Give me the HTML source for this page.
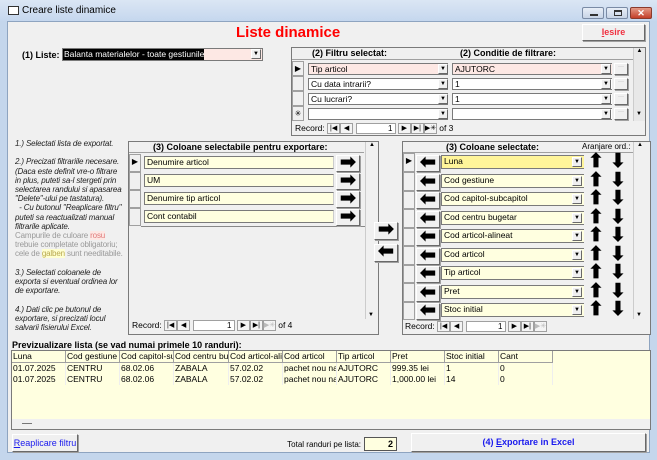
<!DOCTYPE html>
<html><head><meta charset="utf-8">
<style>
*{margin:0;padding:0;box-sizing:border-box}
body{width:657px;height:460px;overflow:hidden;background:#c4d6ec;font-family:"Liberation Sans",sans-serif;font-size:9px;color:#000;position:relative}
.a{position:absolute}
.tb{left:0;top:0;width:657px;height:21px;background:linear-gradient(#dbe6f4,#c5d7ee)}
.cont{left:7px;top:21px;width:643px;height:432px;background:#f0f0f0;border:1px solid #8ea4c0}
.btn{background:#f0f0f0;border:1px solid;border-color:#fff #696969 #696969 #fff;box-shadow:1px 1px 0 #a0a0a0}
.grid{border:1px solid #7a7a7a;background:#f0f0f0}
.cb{background:#fff;border:1px solid #7a7a7a;border-right:none;height:12px;font-size:8.5px;line-height:11px;padding-left:2px;white-space:nowrap;overflow:hidden}
.dd{width:10px;height:10px;border:1px solid;border-color:#fff #696969 #696969 #fff;background:#f0f0f0;font-size:6px;line-height:8px;text-align:center}
.sel{width:12px;border:1px solid #a0a0a0;background:#f0f0f0}
.yl{background:#ffffe0}
.pk{background:#fde8e4}
.it{font-style:italic;font-size:8px;line-height:9.2px;color:#222;white-space:nowrap;letter-spacing:-0.15px}
.arr{width:24px;height:17px;font-size:19px;line-height:14px;text-align:center;font-weight:bold}
.nav{font-size:8.5px;white-space:nowrap}
.nb{display:inline-block;width:13px;height:11px;border:1px solid #a0a0a0;background:#f4f4f4;text-align:center;font-size:7px;line-height:9px;vertical-align:middle}
.hd{background:#ffffe0;border-right:1px solid #a0a0a0;border-bottom:1px solid #a0a0a0;height:12px;line-height:11px;padding-left:1px;overflow:hidden;white-space:nowrap;font-size:8.5px;flex:none}
.cell{height:11px;line-height:11px;padding-left:1px;overflow:hidden;white-space:nowrap;font-size:8.5px;border-right:1px solid #eee;flex:none}
.ud{font-size:19px;font-weight:bold;line-height:18px}
</style></head><body>
<div class="a tb"></div>
<div class="a" style="left:8px;top:6px;width:11px;height:9px;border:1px solid #333;background:#fff"></div>
<div class="a" style="left:22px;top:5px;font-size:10px;color:#000">Creare liste dinamice</div>
<div class="a" style="left:582px;top:7px;width:22px;height:12px;border:1px solid #7a8ba5;border-radius:2px;background:linear-gradient(#e8eef7,#c8d4e6)"><div class="a" style="left:7px;top:6px;width:8px;height:2px;background:#333"></div></div>
<div class="a" style="left:606px;top:7px;width:22px;height:12px;border:1px solid #7a8ba5;border-radius:2px;background:linear-gradient(#e8eef7,#c8d4e6)"><div class="a" style="left:7px;top:2px;width:8px;height:6px;border:1px solid #333;border-top-width:2px"></div></div>
<div class="a" style="left:630px;top:7px;width:22px;height:12px;border:1px solid #8a3a2c;border-radius:2px;background:linear-gradient(#e49a86,#c4402a);color:#fff;font-size:9px;text-align:center;line-height:10px;font-weight:bold">✕</div>
<div class="a cont"></div>

<div class="a" style="left:236px;top:24px;font-size:15px;font-weight:bold;color:#f00">Liste dinamice</div>
<div class="a btn" style="left:582px;top:24px;width:63px;height:17px;color:#f03040;font-weight:bold;font-size:9px;text-align:center;line-height:15px"><u>I</u>esire</div>

<div class="a" style="left:22px;top:50px;font-weight:bold;font-size:9px">(1) Liste:</div>
<div class="a" style="left:62px;top:48px;width:201px;height:13px;border:1px solid #7a7a7a;background:#fde8e4"><span style="background:#000;color:#fff;font-size:8.5px;line-height:11px;display:inline-block;padding-left:1px;white-space:nowrap">Balanta materialelor - toate gestiunile</span><div class="a dd" style="right:1px;top:0">▼</div></div>

<!-- filter grid -->
<div class="a grid" style="left:291px;top:47px;width:355px;height:89px"></div>
<div class="a" style="left:292px;top:48px;width:341px;height:12px;border-bottom:1px solid #a0a0a0"></div>
<div class="a" style="left:312px;top:48px;font-weight:bold;font-size:9px">(2) Filtru selectat:</div>
<div class="a" style="left:460px;top:48px;font-weight:bold;font-size:9px">(2) Conditie de filtrare:</div>
<div class="a" style="left:633px;top:48px;width:12px;height:73px;background:#e8e8e8;border-left:1px solid #ccc"><div style="font-size:6px;text-align:center">▲</div></div>
<div class="a" style="left:633px;top:108px;width:12px;height:12px;font-size:6px;text-align:center;line-height:12px">▼</div>

<div class="a sel" style="left:292px;top:61px;height:15px;font-size:8px;line-height:13px;text-align:center">▶</div>
<div class="a sel" style="left:292px;top:76px;height:15px"></div>
<div class="a sel" style="left:292px;top:91px;height:15px"></div>
<div class="a sel" style="left:292px;top:106px;height:15px;font-size:8px;line-height:13px;text-align:center">✳</div>

<div class="a cb pk" style="left:308px;top:63px;width:140px">Tip articol</div><div class="a dd" style="left:438px;top:64px">▼</div>
<div class="a cb pk" style="left:452px;top:63px;width:160px">AJUTORC</div><div class="a dd" style="left:601px;top:64px">▼</div>
<div class="a cb" style="left:308px;top:78px;width:140px">Cu data intrarii?</div><div class="a dd" style="left:438px;top:79px">▼</div>
<div class="a cb" style="left:452px;top:78px;width:160px">1</div><div class="a dd" style="left:601px;top:79px">▼</div>
<div class="a cb" style="left:308px;top:93px;width:140px">Cu lucrari?</div><div class="a dd" style="left:438px;top:94px">▼</div>
<div class="a cb" style="left:452px;top:93px;width:160px">1</div><div class="a dd" style="left:601px;top:94px">▼</div>
<div class="a cb" style="left:308px;top:108px;width:140px"></div><div class="a dd" style="left:438px;top:109px">▼</div>
<div class="a cb" style="left:452px;top:108px;width:160px"></div><div class="a dd" style="left:601px;top:109px">▼</div>
<div class="a btn" style="left:614px;top:63px;width:14px;height:12px;font-size:6px;color:#999;text-align:center">···</div>
<div class="a btn" style="left:614px;top:78px;width:14px;height:12px;font-size:6px;color:#999;text-align:center">···</div>
<div class="a btn" style="left:614px;top:93px;width:14px;height:12px;font-size:6px;color:#999;text-align:center">···</div>
<div class="a btn" style="left:614px;top:108px;width:14px;height:12px;font-size:6px;color:#999;text-align:center">···</div>
<div class="a nav" style="left:295px;top:123px">Record: <span class="nb">|◀</span><span class="nb">◀</span> <span class="nb" style="width:40px;background:#fff;text-align:right;padding-right:2px;font-size:8px">1</span> <span class="nb">▶</span><span class="nb">▶|</span><span class="nb">▶✳</span> of 3</div>

<!-- instructions -->
<div class="a it" style="left:15px;top:139px;width:112px;overflow:hidden">
1.) Selectati lista de exportat.<br><br>
2.) Precizati filtrariile necesare.<br>(Daca este definit vre-o filtrare<br>in plus, puteti sa-l stergeti prin<br>selectarea randului si apasarea<br>"Delete"-ului pe tastatura).<br>
&nbsp;&nbsp;- Cu butonul "Reaplicare filtru"<br>puteti sa reactualizati manual<br>filtrarile aplicate.<br>
<span style="font-style:normal;color:#999">Campurile de culoare <span style="color:#e07a7a;background:#fde8e4">rosu</span><br>trebuie completate obligatoriu;<br>cele de <span style="color:#b8a850;background:#ffffd0">galben</span> sunt needitabile.</span><br><br>
3.) Selectati coloanele de<br>exporta si eventual ordinea lor<br>de exportare.<br><br>
4.) Dati clic pe butonul de<br>exportare, si precizati locul<br>salvarii fisierului Excel.</div>

<!-- left grid -->
<div class="a grid" style="left:128px;top:141px;width:251px;height:194px"></div>
<div class="a" style="left:129px;top:142px;width:235px;height:11px;border-bottom:1px solid #a0a0a0"></div>
<div class="a" style="left:153px;top:142px;font-weight:bold;font-size:9px">(3) Coloane selectabile pentru exportare:</div>
<div class="a" style="left:365px;top:142px;width:13px;height:177px;border-left:1px solid #ccc;font-size:6px;text-align:center">▲<div class="a" style="top:170px;left:2px">▼</div></div>
<div class="a sel" style="left:129px;top:154px;height:18px;font-size:8px;text-align:center;line-height:14px">▶</div>
<div class="a sel" style="left:129px;top:172px;height:18px"></div>
<div class="a sel" style="left:129px;top:190px;height:18px"></div>
<div class="a sel" style="left:129px;top:208px;height:18px"></div>
<div class="a" style="left:141px;top:226px;width:224px;height:1px;background:#888"></div>
<div class="a cb yl" style="left:144px;top:156px;width:190px;height:13px;border-right:1px solid #ccc">Denumire articol</div><div class="a btn arr" style="left:336px;top:155px">➡</div>
<div class="a cb yl" style="left:144px;top:174px;width:190px;height:13px;border-right:1px solid #ccc">UM</div><div class="a btn arr" style="left:336px;top:173px">➡</div>
<div class="a cb yl" style="left:144px;top:192px;width:190px;height:13px;border-right:1px solid #ccc">Denumire tip articol</div><div class="a btn arr" style="left:336px;top:191px">➡</div>
<div class="a cb yl" style="left:144px;top:210px;width:190px;height:13px;border-right:1px solid #ccc">Cont contabil</div><div class="a btn arr" style="left:336px;top:209px">➡</div>
<div class="a nav" style="left:132px;top:320px">Record: <span class="nb">|◀</span><span class="nb">◀</span> <span class="nb" style="width:42px;background:#fff;text-align:right;padding-right:2px;font-size:8px">1</span> <span class="nb">▶</span><span class="nb">▶|</span><span class="nb" style="color:#bbb">▶✳</span> of 4</div>

<!-- middle -->
<div class="a btn arr" style="left:374px;top:222px;width:24px;height:18px">➡</div>
<div class="a btn arr" style="left:374px;top:244px;width:24px;height:18px">⬅</div>

<!-- right grid -->
<div class="a grid" style="left:402px;top:141px;width:249px;height:194px"></div>
<div class="a" style="left:403px;top:142px;width:230px;height:11px;border-bottom:1px solid #a0a0a0"></div>
<div class="a" style="left:446px;top:142px;font-weight:bold;font-size:9px">(3) Coloane selectate:</div>
<div class="a" style="left:582px;top:142px;font-size:8px">Aranjare ord.:</div>
<div class="a" style="left:633px;top:142px;width:13px;height:177px;border-left:1px solid #ccc;font-size:6px;text-align:center">▲<div class="a" style="top:170px;left:2px">▼</div></div>

<div class="a sel" style="left:403px;top:153px;height:19px;font-size:8px;text-align:center;line-height:14px">▶</div>
<div class="a sel" style="left:403px;top:172px;height:19px"></div>
<div class="a sel" style="left:403px;top:191px;height:18px"></div>
<div class="a sel" style="left:403px;top:209px;height:19px"></div>
<div class="a sel" style="left:403px;top:228px;height:18px"></div>
<div class="a sel" style="left:403px;top:246px;height:19px"></div>
<div class="a sel" style="left:403px;top:265px;height:18px"></div>
<div class="a sel" style="left:403px;top:283px;height:19px"></div>
<div class="a sel" style="left:403px;top:302px;height:18px"></div>

<div class="a btn arr" style="left:416px;top:155px">⬅</div><div class="a cb" style="left:441px;top:155px;width:143px;height:14px;background:#fff59a">Luna</div><div class="a dd" style="left:572px;top:157px">▼</div><div class="a ud" style="left:588px;top:153px">⬆</div><div class="a ud" style="left:610px;top:153px">⬇</div>
<div class="a btn arr" style="left:416px;top:174px">⬅</div><div class="a cb yl" style="left:441px;top:174px;width:143px;height:14px">Cod gestiune</div><div class="a dd" style="left:572px;top:176px">▼</div><div class="a ud" style="left:588px;top:172px">⬆</div><div class="a ud" style="left:610px;top:172px">⬇</div>
<div class="a btn arr" style="left:416px;top:192px">⬅</div><div class="a cb yl" style="left:441px;top:192px;width:143px;height:14px">Cod capitol-subcapitol</div><div class="a dd" style="left:572px;top:194px">▼</div><div class="a ud" style="left:588px;top:190px">⬆</div><div class="a ud" style="left:610px;top:190px">⬇</div>
<div class="a btn arr" style="left:416px;top:211px">⬅</div><div class="a cb yl" style="left:441px;top:211px;width:143px;height:14px">Cod centru bugetar</div><div class="a dd" style="left:572px;top:213px">▼</div><div class="a ud" style="left:588px;top:209px">⬆</div><div class="a ud" style="left:610px;top:209px">⬇</div>
<div class="a btn arr" style="left:416px;top:229px">⬅</div><div class="a cb yl" style="left:441px;top:229px;width:143px;height:14px">Cod articol-alineat</div><div class="a dd" style="left:572px;top:231px">▼</div><div class="a ud" style="left:588px;top:227px">⬆</div><div class="a ud" style="left:610px;top:227px">⬇</div>
<div class="a btn arr" style="left:416px;top:248px">⬅</div><div class="a cb yl" style="left:441px;top:248px;width:143px;height:14px">Cod articol</div><div class="a dd" style="left:572px;top:250px">▼</div><div class="a ud" style="left:588px;top:246px">⬆</div><div class="a ud" style="left:610px;top:246px">⬇</div>
<div class="a btn arr" style="left:416px;top:266px">⬅</div><div class="a cb yl" style="left:441px;top:266px;width:143px;height:14px">Tip articol</div><div class="a dd" style="left:572px;top:268px">▼</div><div class="a ud" style="left:588px;top:264px">⬆</div><div class="a ud" style="left:610px;top:264px">⬇</div>
<div class="a btn arr" style="left:416px;top:285px">⬅</div><div class="a cb yl" style="left:441px;top:285px;width:143px;height:14px">Pret</div><div class="a dd" style="left:572px;top:287px">▼</div><div class="a ud" style="left:588px;top:283px">⬆</div><div class="a ud" style="left:610px;top:283px">⬇</div>
<div class="a btn arr" style="left:416px;top:303px">⬅</div><div class="a cb yl" style="left:441px;top:303px;width:143px;height:14px">Stoc initial</div><div class="a dd" style="left:572px;top:305px">▼</div><div class="a ud" style="left:588px;top:301px">⬆</div><div class="a ud" style="left:610px;top:301px">⬇</div>
<div class="a nav" style="left:405px;top:321px">Record: <span class="nb">|◀</span><span class="nb">◀</span> <span class="nb" style="width:40px;background:#fff;text-align:right;padding-right:2px;font-size:8px">1</span> <span class="nb">▶</span><span class="nb">▶|</span><span class="nb" style="color:#bbb">▶✳</span></div>

<!-- preview -->
<div class="a" style="left:12px;top:340px;font-weight:bold;font-size:9px">Previzualizare lista (se vad numai primele 10 randuri):</div>
<div class="a" style="left:11px;top:350px;width:640px;height:80px;background:#ffffe0;border:1px solid #7a7a7a;overflow:hidden">
<div style="display:flex;width:700px">
<div class="hd" style="width:54px">Luna</div><div class="hd" style="width:54px">Cod gestiune</div><div class="hd" style="width:54px">Cod capitol-subcap</div><div class="hd" style="width:55px">Cod centru bugetar</div><div class="hd" style="width:54px">Cod articol-alineat</div><div class="hd" style="width:54px">Cod articol</div><div class="hd" style="width:54px">Tip articol</div><div class="hd" style="width:54px">Pret</div><div class="hd" style="width:54px">Stoc initial</div><div class="hd" style="width:54px">Cant</div>
</div>
<div style="display:flex;width:700px">
<div class="cell" style="width:54px">01.07.2025</div><div class="cell" style="width:54px">CENTRU</div><div class="cell" style="width:54px">68.02.06</div><div class="cell" style="width:55px">ZABALA</div><div class="cell" style="width:54px">57.02.02</div><div class="cell" style="width:54px">pachet nou nascuti</div><div class="cell" style="width:54px">AJUTORC</div><div class="cell" style="width:54px">999.35 lei</div><div class="cell" style="width:54px">1</div><div class="cell" style="width:54px">0</div>
</div>
<div style="display:flex;width:700px">
<div class="cell" style="width:54px">01.07.2025</div><div class="cell" style="width:54px">CENTRU</div><div class="cell" style="width:54px">68.02.06</div><div class="cell" style="width:55px">ZABALA</div><div class="cell" style="width:54px">57.02.02</div><div class="cell" style="width:54px">pachet nou nascuti</div><div class="cell" style="width:54px">AJUTORC</div><div class="cell" style="width:54px">1,000.00 lei</div><div class="cell" style="width:54px">14</div><div class="cell" style="width:54px">0</div>
</div>
<div class="a" style="left:0;top:68px;width:638px;height:11px;background:#f0f0f0"><div class="a" style="left:10px;top:4px;width:10px;height:1px;background:#777"></div></div>
</div>

<div class="a btn" style="left:12px;top:434px;width:66px;height:18px;color:#1a1aee;font-size:9px;text-align:center;line-height:16px;white-space:nowrap"><u>R</u>eaplicare filtru</div>
<div class="a" style="left:275px;top:440px;width:86px;text-align:right;font-size:8px;white-space:nowrap">Total randuri pe lista:</div>
<div class="a" style="left:364px;top:437px;width:33px;height:14px;background:#ffffe0;border:1px solid #555;font-weight:bold;font-size:9px;text-align:right;padding-right:3px;line-height:12px">2</div>
<div class="a btn" style="left:411px;top:433px;width:235px;height:19px;color:#1a1aee;font-weight:bold;font-size:9px;text-align:center;line-height:17px">(4) <u>E</u>xportare in Excel</div>
</body></html>
